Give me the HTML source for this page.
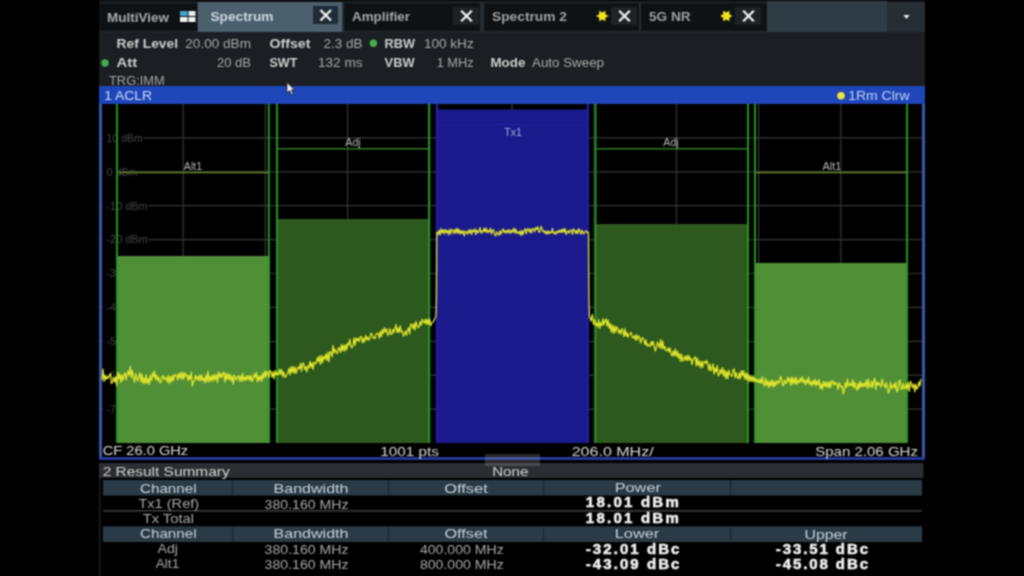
<!DOCTYPE html>
<html><head><meta charset="utf-8">
<style>
html,body{margin:0;padding:0;width:1024px;height:576px;background:#000;overflow:hidden}
svg{display:block}
text{font-family:"Liberation Sans",sans-serif}
</style></head><body>
<svg width="1024" height="576" viewBox="0 0 1024 576">
<defs><filter id="bl" x="0" y="0" width="1024" height="576" filterUnits="userSpaceOnUse" color-interpolation-filters="sRGB"><feConvolveMatrix order="3" kernelMatrix="1 2 1 2 4 2 1 2 1" divisor="16" edgeMode="duplicate"/></filter></defs>
<g filter="url(#bl)">
<rect x="0" y="0" width="1024" height="576" fill="#000"/>
<rect x="99" y="0" width="826" height="32" fill="#262d33" />
<rect x="99" y="0" width="826" height="2" fill="#0d1013" />
<rect x="99" y="3" width="98" height="28" fill="#0e1215" />
<text x="107" y="22" font-size="13" font-weight="bold" fill="#a9a9a9" text-anchor="start" textLength="62" lengthAdjust="spacingAndGlyphs">MultiView</text>
<g><rect x="180" y="11" width="7.5" height="5" fill="#3ea4d6"/><rect x="188.5" y="11" width="7" height="5" fill="#ececec"/><rect x="180" y="17" width="7.5" height="5" fill="#f2f2f2"/><rect x="188.5" y="17" width="7" height="5" fill="#f2f2f2"/></g>
<rect x="198" y="2" width="144" height="30" fill="#4b5f6d" />
<text x="210.5" y="21" font-size="13" font-weight="bold" fill="#cfd9e0" text-anchor="start" textLength="63" lengthAdjust="spacingAndGlyphs">Spectrum</text>
<rect x="313" y="6" width="25" height="18" fill="#1f2b36" />
<rect x="344" y="3" width="136" height="28" fill="#0e1215" />
<text x="352" y="21" font-size="13" font-weight="bold" fill="#a8a8a8" text-anchor="start" textLength="58" lengthAdjust="spacingAndGlyphs">Amplifier</text>
<rect x="453" y="7" width="26" height="18" fill="#1d2226" />
<rect x="484" y="3" width="155" height="28" fill="#0e1215" />
<text x="492" y="21" font-size="13" font-weight="bold" fill="#a0a0a0" text-anchor="start" textLength="75" lengthAdjust="spacingAndGlyphs">Spectrum 2</text>
<rect x="611" y="7" width="26" height="18" fill="#1d2226" />
<rect x="641" y="3" width="126" height="28" fill="#0e1215" />
<text x="649" y="21" font-size="13" font-weight="bold" fill="#a0a0a0" text-anchor="start" textLength="41.5" lengthAdjust="spacingAndGlyphs">5G NR</text>
<rect x="735" y="7" width="26" height="18" fill="#1d2226" />
<rect x="767" y="1" width="120" height="31" fill="#2f3c46" />
<g stroke="#f0f0f0" stroke-width="2.3"><path d="M320.5,10 L331,20.5 M331,10 L320.5,20.5"/><path d="M461.2,10.8 L471.8,21.2 M471.8,10.8 L461.2,21.2"/><path d="M619.2,10.8 L629.8,21.2 M629.8,10.8 L619.2,21.2"/><path d="M743.2,10.8 L753.8,21.2 M753.8,10.8 L743.2,21.2"/></g>
<polygon points="608.50,16.00 605.42,17.80 605.40,21.37 602.30,19.60 599.20,21.37 599.18,17.80 596.10,16.00 599.18,14.20 599.20,10.63 602.30,12.40 605.40,10.63 605.42,14.20" fill="#f5e21a"/>
<polygon points="732.50,16.00 729.42,17.80 729.40,21.37 726.30,19.60 723.20,21.37 723.18,17.80 720.10,16.00 723.18,14.20 723.20,10.63 726.30,12.40 729.40,10.63 729.42,14.20" fill="#f5e21a"/>
<polygon points="903.5,15 909.5,15 906.5,19" fill="#f0f0f0"/>
<rect x="99" y="32" width="826" height="54" fill="#1b1e23" />
<text x="116.6" y="48.4" font-size="12.5" font-weight="bold" fill="#cccccc" text-anchor="start" textLength="61.5" lengthAdjust="spacingAndGlyphs">Ref Level</text>
<text x="251" y="48.4" font-size="12.5" fill="#a8a8a8" text-anchor="end" textLength="65.7" lengthAdjust="spacingAndGlyphs">20.00 dBm</text>
<text x="269.5" y="48.4" font-size="12.5" font-weight="bold" fill="#cccccc" text-anchor="start" textLength="41" lengthAdjust="spacingAndGlyphs">Offset</text>
<text x="362.5" y="48.4" font-size="12.5" fill="#a8a8a8" text-anchor="end" textLength="39" lengthAdjust="spacingAndGlyphs">2.3 dB</text>
<text x="384.6" y="48.4" font-size="12.5" font-weight="bold" fill="#cccccc" text-anchor="start" textLength="30.4" lengthAdjust="spacingAndGlyphs">RBW</text>
<text x="473.7" y="48.4" font-size="12.5" fill="#a8a8a8" text-anchor="end" textLength="49.8" lengthAdjust="spacingAndGlyphs">100 kHz</text>
<text x="116.6" y="67.3" font-size="12.5" font-weight="bold" fill="#cccccc" text-anchor="start" textLength="20.7" lengthAdjust="spacingAndGlyphs">Att</text>
<text x="251" y="67.3" font-size="12.5" fill="#a8a8a8" text-anchor="end" textLength="34" lengthAdjust="spacingAndGlyphs">20 dB</text>
<text x="269.5" y="67.3" font-size="12.5" font-weight="bold" fill="#cccccc" text-anchor="start">SWT</text>
<text x="362.5" y="67.3" font-size="12.5" fill="#a8a8a8" text-anchor="end" textLength="44.5" lengthAdjust="spacingAndGlyphs">132 ms</text>
<text x="384.6" y="67.3" font-size="12.5" font-weight="bold" fill="#cccccc" text-anchor="start" textLength="30" lengthAdjust="spacingAndGlyphs">VBW</text>
<text x="473.7" y="67.3" font-size="12.5" fill="#a8a8a8" text-anchor="end" textLength="37" lengthAdjust="spacingAndGlyphs">1 MHz</text>
<text x="490.4" y="67.3" font-size="12.5" font-weight="bold" fill="#cccccc" text-anchor="start" textLength="35" lengthAdjust="spacingAndGlyphs">Mode</text>
<text x="532" y="67.3" font-size="12.5" fill="#a8a8a8" text-anchor="start" textLength="72" lengthAdjust="spacingAndGlyphs">Auto Sweep</text>
<text x="109" y="84.5" font-size="12.5" fill="#a4a4a4" text-anchor="start" textLength="55.8" lengthAdjust="spacingAndGlyphs">TRG:IMM</text>
<circle cx="105" cy="63" r="3.7" fill="#44b04c"/><circle cx="373.4" cy="43.3" r="3.7" fill="#44b04c"/>
<rect x="99" y="86" width="826" height="18" fill="#1e46b8" />
<text x="104.3" y="100" font-size="13" fill="#cfdcf6" text-anchor="start" textLength="47.7" lengthAdjust="spacingAndGlyphs">1 ACLR</text>
<circle cx="841" cy="95.8" r="3.8" fill="#f2e43a"/>
<text x="848.2" y="100" font-size="13" fill="#c0d0f0" text-anchor="start" textLength="61.4" lengthAdjust="spacingAndGlyphs">1Rm Clrw</text>
<polygon points="287,82.5 287,93 289.6,90.6 291.6,95 293.2,94.2 291.3,90 294.5,90" fill="#f4f4f4" stroke="#111" stroke-width="0.7"/>
<rect x="99" y="104" width="3" height="356" fill="#3a58a8" />
<rect x="922" y="104" width="3" height="356" fill="#3a58a8" />
<rect x="99" y="457" width="826" height="3" fill="#283898" />
<g stroke="#363636" stroke-width="1.2"><line x1="183.2" y1="104" x2="183.2" y2="443"/><line x1="265.4" y1="104" x2="265.4" y2="443"/><line x1="347.6" y1="104" x2="347.6" y2="443"/><line x1="429.8" y1="104" x2="429.8" y2="443"/><line x1="512.0" y1="104" x2="512.0" y2="443"/><line x1="594.2" y1="104" x2="594.2" y2="443"/><line x1="676.4" y1="104" x2="676.4" y2="443"/><line x1="758.6" y1="104" x2="758.6" y2="443"/><line x1="840.8" y1="104" x2="840.8" y2="443"/><line x1="102" y1="137.9" x2="922" y2="137.9"/><line x1="102" y1="171.8" x2="922" y2="171.8"/><line x1="102" y1="205.7" x2="922" y2="205.7"/><line x1="102" y1="239.6" x2="922" y2="239.6"/><line x1="102" y1="273.5" x2="922" y2="273.5"/><line x1="102" y1="307.4" x2="922" y2="307.4"/><line x1="102" y1="341.3" x2="922" y2="341.3"/><line x1="102" y1="375.2" x2="922" y2="375.2"/><line x1="102" y1="409.1" x2="922" y2="409.1"/></g>
<rect x="103" y="131.9" width="40.4" height="12" fill="#000" />
<text x="106.5" y="141.7" font-size="10.5" fill="#464646" text-anchor="start" textLength="36.4" lengthAdjust="spacingAndGlyphs">10 dBm</text>
<rect x="103" y="165.8" width="35" height="12" fill="#000" />
<text x="106.5" y="175.6" font-size="10.5" fill="#464646" text-anchor="start" textLength="31" lengthAdjust="spacingAndGlyphs">0 dBm</text>
<rect x="103" y="199.7" width="45" height="12" fill="#000" />
<text x="106.5" y="209.5" font-size="10.5" fill="#464646" text-anchor="start" textLength="41" lengthAdjust="spacingAndGlyphs">-10 dBm</text>
<rect x="103" y="233.6" width="45" height="12" fill="#000" />
<text x="106.5" y="243.4" font-size="10.5" fill="#464646" text-anchor="start" textLength="41" lengthAdjust="spacingAndGlyphs">-20 dBm</text>
<rect x="103" y="267.5" width="45" height="12" fill="#000" />
<text x="106.5" y="277.3" font-size="10.5" fill="#464646" text-anchor="start" textLength="41" lengthAdjust="spacingAndGlyphs">-30 dBm</text>
<rect x="103" y="301.4" width="45" height="12" fill="#000" />
<text x="106.5" y="311.2" font-size="10.5" fill="#464646" text-anchor="start" textLength="41" lengthAdjust="spacingAndGlyphs">-40 dBm</text>
<rect x="103" y="335.3" width="45" height="12" fill="#000" />
<text x="106.5" y="345.1" font-size="10.5" fill="#464646" text-anchor="start" textLength="41" lengthAdjust="spacingAndGlyphs">-50 dBm</text>
<rect x="103" y="369.2" width="45" height="12" fill="#000" />
<text x="106.5" y="379.0" font-size="10.5" fill="#464646" text-anchor="start" textLength="41" lengthAdjust="spacingAndGlyphs">-60 dBm</text>
<rect x="103" y="403.1" width="45" height="12" fill="#000" />
<text x="106.5" y="412.9" font-size="10.5" fill="#464646" text-anchor="start" textLength="41" lengthAdjust="spacingAndGlyphs">-70 dBm</text>
<rect x="117" y="256" width="153" height="187" fill="#518f37" />
<rect x="277" y="219" width="151" height="224" fill="#2d581e" />
<rect x="436" y="109.5" width="153" height="333.5" fill="#1a1a8c" />
<rect x="595" y="224" width="153" height="219" fill="#2d581e" />
<rect x="755" y="263" width="152" height="180" fill="#518f37" />
<g stroke="#239a25" stroke-width="1.9"><line x1="117" y1="104" x2="117" y2="443"/><line x1="268.8" y1="104" x2="268.8" y2="443"/><line x1="277" y1="104" x2="277" y2="443"/><line x1="429" y1="104" x2="429" y2="443"/><line x1="595.5" y1="104" x2="595.5" y2="443"/><line x1="748" y1="104" x2="748" y2="443"/><line x1="755" y1="104" x2="755" y2="443"/><line x1="907" y1="104" x2="907" y2="443"/></g>
<g stroke="#1e1ea6" stroke-width="2.4"><line x1="437" y1="104" x2="437" y2="443"/><line x1="587.8" y1="104" x2="587.8" y2="443"/></g>
<g stroke-width="1.6"><line x1="118" y1="172.5" x2="268" y2="172.5" stroke="#6a862c" stroke-width="1.3"/><line x1="756" y1="172.5" x2="906" y2="172.5" stroke="#6a862c" stroke-width="1.3"/><line x1="278" y1="148.8" x2="428" y2="148.8" stroke="#347a26"/><line x1="596" y1="148.8" x2="747" y2="148.8" stroke="#347a26"/><line x1="438" y1="124.5" x2="587" y2="124.5" stroke="#20209e" stroke-width="1.2"/></g>
<text x="193" y="170.3" font-size="10.5" fill="#b4b4b4" text-anchor="middle" textLength="18.3" lengthAdjust="spacingAndGlyphs">Alt1</text>
<text x="353" y="146" font-size="10.5" fill="#b4b4b4" text-anchor="middle" textLength="15.5" lengthAdjust="spacingAndGlyphs">Adj</text>
<text x="513" y="135.5" font-size="10.5" fill="#aab0dc" text-anchor="middle" textLength="17.6" lengthAdjust="spacingAndGlyphs">Tx1</text>
<text x="671" y="146" font-size="10.5" fill="#b4b4b4" text-anchor="middle" textLength="15.5" lengthAdjust="spacingAndGlyphs">Adj</text>
<text x="832" y="170.3" font-size="10.5" fill="#b4b4b4" text-anchor="middle" textLength="19" lengthAdjust="spacingAndGlyphs">Alt1</text>
<path d="M102.0,380.3 L103.0,369.0 L104.1,381.5 L105.1,375.0 L106.2,379.7 L107.2,376.2 L108.3,378.3 L109.3,375.2 L110.4,373.6 L111.4,383.6 L112.5,381.8 L113.5,377.4 L114.6,382.2 L115.6,376.8 L116.7,385.8 L117.7,372.3 L118.8,378.9 L119.8,374.0 L120.9,382.6 L121.9,375.0 L123.0,380.3 L124.0,374.7 L125.1,372.9 L126.1,379.8 L127.2,374.4 L128.2,370.9 L129.3,375.6 L130.3,366.4 L131.4,377.7 L132.4,370.5 L133.5,378.2 L134.6,382.1 L135.6,373.6 L136.7,378.2 L137.7,381.0 L138.8,375.8 L139.8,372.8 L140.9,381.9 L141.9,374.0 L143.0,383.3 L144.0,378.0 L145.1,383.5 L146.1,374.7 L147.2,383.4 L148.2,378.6 L149.3,384.3 L150.3,375.6 L151.4,380.5 L152.4,372.9 L153.5,376.8 L154.5,371.1 L155.6,379.7 L156.6,375.0 L157.7,380.5 L158.7,377.2 L159.8,382.7 L160.8,382.7 L161.9,377.1 L162.9,375.5 L164.0,379.6 L165.0,377.3 L166.1,378.2 L167.1,381.8 L168.2,375.4 L169.2,383.3 L170.3,376.5 L171.3,382.1 L172.4,375.3 L173.4,380.9 L174.5,374.6 L175.5,375.7 L176.6,374.9 L177.6,379.9 L178.7,373.3 L179.7,378.2 L180.8,372.4 L181.8,379.3 L182.9,372.4 L183.9,378.8 L185.0,372.6 L186.0,376.2 L187.1,374.8 L188.1,380.6 L189.2,375.3 L190.2,379.5 L191.3,372.2 L192.3,386.2 L193.4,381.6 L194.4,381.3 L195.5,375.2 L196.5,379.4 L197.6,376.5 L198.6,380.6 L199.7,374.8 L200.7,380.6 L201.8,375.0 L202.8,380.7 L203.9,378.3 L204.9,382.8 L206.0,374.8 L207.0,381.6 L208.1,371.2 L209.1,382.0 L210.2,376.3 L211.2,381.1 L212.3,375.0 L213.3,380.8 L214.4,374.7 L215.4,379.8 L216.5,374.5 L217.5,382.4 L218.6,371.9 L219.6,377.4 L220.7,373.7 L221.7,377.9 L222.8,373.1 L223.8,372.1 L224.9,381.9 L225.9,373.4 L227.0,379.5 L228.0,373.6 L229.1,379.7 L230.1,374.4 L231.2,380.8 L232.2,375.8 L233.3,384.2 L234.3,375.1 L235.4,377.8 L236.4,380.1 L237.5,376.3 L238.5,375.8 L239.6,381.1 L240.6,375.6 L241.7,381.3 L242.7,373.4 L243.8,380.5 L244.8,376.9 L245.9,380.5 L246.9,375.4 L248.0,379.3 L249.0,375.6 L250.1,380.5 L251.1,375.4 L252.2,381.6 L253.2,379.1 L254.3,373.9 L255.3,377.4 L256.4,372.5 L257.4,381.6 L258.5,376.0 L259.5,380.5 L260.6,375.9 L261.6,381.1 L262.7,373.3 L263.7,378.3 L264.8,370.8 L265.8,377.0 L266.9,371.7 L267.9,372.5 L269.0,377.4 L270.0,370.3 L271.1,372.4 L272.1,377.3 L273.2,371.5 L274.2,378.9 L275.3,370.7 L276.3,375.1 L277.4,372.7 L278.4,375.0 L279.5,369.1 L280.5,374.4 L281.6,369.4 L282.6,376.6 L283.7,371.8 L284.7,377.2 L285.8,377.1 L286.8,374.3 L287.9,372.7 L288.9,368.4 L290.0,375.0 L291.0,366.7 L292.1,372.7 L293.1,366.5 L294.2,373.5 L295.2,367.0 L296.3,373.3 L297.3,368.8 L298.4,367.0 L299.4,369.2 L300.5,363.4 L301.5,371.5 L302.6,363.3 L303.6,363.0 L304.7,369.6 L305.7,366.5 L306.8,371.9 L307.8,365.9 L308.9,368.0 L309.9,361.4 L311.0,367.4 L312.0,362.7 L313.1,369.5 L314.1,362.0 L315.2,363.9 L316.2,363.2 L317.3,357.6 L318.3,362.0 L319.4,355.8 L320.4,364.3 L321.5,355.4 L322.5,362.9 L323.6,356.4 L324.6,359.1 L325.7,354.0 L326.7,360.4 L327.8,352.5 L328.8,361.8 L329.9,351.3 L330.9,353.1 L332.0,356.9 L333.0,345.3 L334.1,353.2 L335.1,349.1 L336.2,352.3 L337.2,353.7 L338.3,348.1 L339.3,347.8 L340.4,352.6 L341.4,344.6 L342.5,350.9 L343.5,344.8 L344.6,351.2 L345.6,344.7 L346.7,349.9 L347.7,343.1 L348.8,345.2 L349.8,339.1 L350.9,346.3 L351.9,347.9 L353.0,345.2 L354.0,337.9 L355.1,345.5 L356.1,338.0 L357.2,340.9 L358.2,338.2 L359.3,341.7 L360.3,336.6 L361.4,336.7 L362.4,342.9 L363.5,338.1 L364.5,342.2 L365.6,335.3 L366.6,339.9 L367.7,336.8 L368.7,340.2 L369.8,338.8 L370.8,333.3 L371.9,334.1 L372.9,338.0 L374.0,337.1 L375.0,338.8 L376.1,333.6 L377.1,333.4 L378.2,333.3 L379.2,338.2 L380.3,331.4 L381.3,337.0 L382.4,329.3 L383.4,333.6 L384.5,327.9 L385.5,331.9 L386.6,328.8 L387.6,335.4 L388.7,334.4 L389.7,328.4 L390.8,334.2 L391.8,334.4 L392.9,329.3 L393.9,332.6 L395.0,328.2 L396.0,324.4 L397.1,332.6 L398.1,328.0 L399.2,332.5 L400.2,325.7 L401.3,332.0 L402.3,331.0 L403.4,336.2 L404.4,334.5 L405.5,331.0 L406.5,335.4 L407.6,330.3 L408.6,327.4 L409.7,333.8 L410.7,323.9 L411.8,325.1 L412.8,328.6 L413.9,323.3 L414.9,330.2 L416.0,321.4 L417.0,325.4 L418.1,327.8 L419.1,326.5 L420.2,321.5 L421.2,325.3 L422.3,319.3 L423.3,321.7 L424.4,323.0 L425.4,319.2 L426.5,324.4 L427.5,319.2 L428.6,324.5 L429.6,318.8 L430.7,325.7 L431.7,322.9 L433.5,321.5 L436.0,316.0 L436.4,300.0 L436.8,232.0 L438.0,234.4 L439.1,230.1 L440.1,235.0 L441.2,228.7 L442.2,233.0 L443.3,229.6 L444.3,233.8 L445.4,229.5 L446.4,232.6 L447.5,230.4 L448.5,234.9 L449.6,229.1 L450.6,234.0 L451.7,229.4 L452.7,230.3 L453.8,233.6 L454.8,229.3 L455.9,233.1 L456.9,228.1 L458.0,233.4 L459.0,229.1 L460.1,234.0 L461.1,230.6 L462.2,233.6 L463.2,230.6 L464.3,235.8 L465.3,231.1 L466.4,231.9 L467.4,234.2 L468.5,230.0 L469.5,233.4 L470.6,229.3 L471.6,234.5 L472.7,230.1 L473.7,231.9 L474.8,228.8 L475.8,234.5 L476.9,230.0 L477.9,232.8 L479.0,231.4 L480.0,227.7 L481.1,233.3 L482.1,230.8 L483.2,232.0 L484.2,228.0 L485.3,232.2 L486.3,228.2 L487.4,232.8 L488.4,230.5 L489.5,232.2 L490.5,228.1 L491.6,234.0 L492.6,230.1 L493.7,229.8 L494.7,234.8 L495.8,235.8 L496.8,231.9 L497.9,233.5 L498.9,235.4 L500.0,230.6 L501.0,234.0 L502.1,231.1 L503.1,228.8 L504.2,232.8 L505.2,230.6 L506.3,233.1 L507.3,230.0 L508.4,232.8 L509.4,229.7 L510.5,233.3 L511.5,230.4 L512.6,232.1 L513.6,228.1 L514.7,233.0 L515.7,228.9 L516.8,233.3 L517.8,231.9 L518.9,233.7 L519.9,231.0 L521.0,235.6 L522.0,230.4 L523.1,234.7 L524.1,230.7 L525.2,228.7 L526.2,233.7 L527.3,229.0 L528.3,228.7 L529.4,232.4 L530.4,228.8 L531.5,233.1 L532.5,228.6 L533.6,228.9 L534.6,231.8 L535.7,227.4 L536.7,229.4 L537.8,226.7 L538.8,232.2 L539.9,232.0 L540.9,226.4 L542.0,228.4 L543.0,231.8 L544.1,230.6 L545.1,233.6 L546.2,231.1 L547.2,234.2 L548.3,230.8 L549.3,233.7 L550.4,231.8 L551.4,232.8 L552.5,228.5 L553.5,233.5 L554.6,232.1 L555.6,234.4 L556.7,231.1 L557.7,233.0 L558.8,230.3 L559.8,232.5 L560.9,229.6 L561.9,232.5 L563.0,228.7 L564.0,232.3 L565.1,228.7 L566.1,234.3 L567.2,232.0 L568.2,230.7 L569.3,233.2 L570.3,230.0 L571.4,229.8 L572.4,234.3 L573.5,229.0 L574.5,230.1 L575.6,233.5 L576.6,230.4 L577.7,233.7 L578.7,228.7 L579.8,230.9 L580.8,234.2 L581.9,230.2 L582.9,233.0 L584.0,233.9 L585.0,231.3 L586.1,230.9 L587.1,232.6 L588.5,232.0 L589.0,300.0 L589.4,316.0 L591.0,321.0 L592.4,314.5 L593.4,324.3 L594.5,319.5 L595.5,325.6 L596.6,322.9 L597.6,327.2 L598.7,319.6 L599.7,328.3 L600.8,322.6 L601.8,325.7 L602.9,318.8 L603.9,325.0 L605.0,320.6 L606.0,318.8 L607.0,326.0 L608.1,319.9 L609.1,328.3 L610.2,323.3 L611.2,332.2 L612.3,324.9 L613.3,333.3 L614.4,325.9 L615.4,332.6 L616.5,326.7 L617.5,328.0 L618.6,333.1 L619.6,330.0 L620.7,334.1 L621.7,328.6 L622.8,331.1 L623.8,336.3 L624.9,328.6 L625.9,336.1 L627.0,332.5 L628.0,337.3 L629.1,334.3 L630.1,334.0 L631.2,332.3 L632.2,337.7 L633.3,337.9 L634.3,335.6 L635.4,340.0 L636.4,334.6 L637.5,340.2 L638.5,335.9 L639.6,337.1 L640.6,343.2 L641.7,338.9 L642.7,337.5 L643.8,339.7 L644.8,344.5 L645.9,339.9 L646.9,346.1 L648.0,343.8 L649.0,346.1 L650.1,346.5 L651.1,341.5 L652.2,345.3 L653.2,341.3 L654.3,346.4 L655.3,351.1 L656.4,347.5 L657.4,342.1 L658.5,344.9 L659.5,347.9 L660.6,339.7 L661.6,348.8 L662.7,340.9 L663.7,348.7 L664.8,346.5 L665.8,350.9 L666.9,350.6 L667.9,347.9 L669.0,352.0 L670.0,347.9 L671.1,354.5 L672.1,355.9 L673.2,350.8 L674.2,356.1 L675.3,348.9 L676.3,356.5 L677.4,351.1 L678.4,358.1 L679.5,353.5 L680.5,361.3 L681.6,354.1 L682.6,360.9 L683.7,360.2 L684.7,356.2 L685.8,360.4 L686.8,355.4 L687.9,360.7 L688.9,355.3 L690.0,360.1 L691.0,358.2 L692.1,364.6 L693.1,359.3 L694.2,358.4 L695.2,356.7 L696.3,365.9 L697.3,357.8 L698.4,365.6 L699.4,361.0 L700.5,367.7 L701.5,361.0 L702.6,367.5 L703.6,361.8 L704.7,361.3 L705.7,363.8 L706.8,360.5 L707.8,363.9 L708.9,370.4 L709.9,364.0 L711.0,370.9 L712.0,368.5 L713.1,363.8 L714.1,374.1 L715.2,368.0 L716.2,372.1 L717.3,365.4 L718.3,375.9 L719.4,374.3 L720.4,369.3 L721.5,373.8 L722.5,367.5 L723.6,376.2 L724.6,369.8 L725.7,378.6 L726.7,371.3 L727.8,378.6 L728.8,370.1 L729.9,374.6 L730.9,375.3 L732.0,376.3 L733.0,370.2 L734.1,368.9 L735.1,377.8 L736.2,372.5 L737.2,377.4 L738.3,378.6 L739.3,372.6 L740.4,378.9 L741.4,370.6 L742.5,375.7 L743.5,370.7 L744.6,379.1 L745.6,373.0 L746.7,379.9 L747.7,373.4 L748.8,381.7 L749.8,375.3 L750.9,381.6 L751.9,375.9 L753.0,382.0 L754.0,376.5 L755.1,381.6 L756.1,378.9 L757.2,382.2 L758.2,379.5 L759.3,382.7 L760.3,379.1 L761.4,383.7 L762.4,376.8 L763.5,383.3 L764.5,386.1 L765.6,378.5 L766.6,385.3 L767.7,380.6 L768.7,387.6 L769.8,381.7 L770.8,385.9 L771.9,379.8 L772.9,386.8 L774.0,381.3 L775.0,386.3 L776.1,381.2 L777.1,384.0 L778.2,380.8 L779.2,383.1 L780.3,376.8 L781.3,377.1 L782.4,384.8 L783.4,385.8 L784.5,380.0 L785.5,383.3 L786.6,383.1 L787.6,377.2 L788.7,381.6 L789.7,378.1 L790.8,385.5 L791.8,376.9 L792.9,384.0 L793.9,378.1 L795.0,383.9 L796.0,377.0 L797.1,384.4 L798.1,380.1 L799.2,382.6 L800.2,378.2 L801.3,381.9 L802.3,376.6 L803.4,382.5 L804.4,379.7 L805.5,384.9 L806.5,379.6 L807.6,383.1 L808.6,376.9 L809.7,384.6 L810.7,381.6 L811.8,385.8 L812.8,380.7 L813.9,384.7 L814.9,379.4 L816.0,385.9 L817.0,380.8 L818.1,384.8 L819.1,379.4 L820.2,388.7 L821.2,384.1 L822.3,389.6 L823.3,381.5 L824.4,386.6 L825.4,381.8 L826.5,387.1 L827.5,382.1 L828.6,387.8 L829.6,381.7 L830.7,387.4 L831.7,380.9 L832.8,381.1 L833.8,385.2 L834.9,381.9 L835.9,384.3 L837.0,383.6 L838.0,389.7 L839.1,382.9 L840.1,384.8 L841.2,387.7 L842.2,386.0 L843.3,393.8 L844.3,389.8 L845.4,382.6 L846.4,387.7 L847.5,379.0 L848.5,385.9 L849.6,385.1 L850.6,383.1 L851.7,386.2 L852.7,379.6 L853.8,387.8 L854.8,382.4 L855.9,387.5 L856.9,390.4 L858.0,383.4 L859.0,388.9 L860.1,381.3 L861.1,387.2 L862.2,382.8 L863.2,386.7 L864.3,383.3 L865.3,386.4 L866.4,380.0 L867.4,388.3 L868.5,379.3 L869.5,386.9 L870.6,387.1 L871.6,381.2 L872.7,387.7 L873.7,381.2 L874.8,378.2 L875.8,389.4 L876.9,381.8 L877.9,385.2 L879.0,382.4 L880.0,385.1 L881.1,387.0 L882.1,379.1 L883.2,384.9 L884.2,384.6 L885.3,387.8 L886.3,382.5 L887.4,387.8 L888.4,393.2 L889.5,390.0 L890.5,382.2 L891.6,388.7 L892.6,386.6 L893.7,384.2 L894.7,388.5 L895.8,382.1 L896.8,391.7 L897.9,390.6 L898.9,381.4 L900.0,380.1 L901.0,389.0 L902.1,389.2 L903.1,383.5 L904.2,388.6 L905.2,388.1 L906.3,383.8 L907.3,389.5 L908.4,382.5 L909.4,391.4 L910.5,381.2 L911.5,384.5 L912.6,387.6 L913.6,383.8 L914.7,391.8 L915.7,384.2 L916.8,389.2 L917.8,387.7 L918.9,381.9 L919.9,386.0 L921.0,378.9" fill="none" stroke="#e2e62c" stroke-width="1.25" stroke-linejoin="round"/>
<text x="102.7" y="455.4" font-size="13" fill="#d6d6d6" text-anchor="start" textLength="85.5" lengthAdjust="spacingAndGlyphs">CF 26.0 GHz</text>
<text x="380.3" y="455.5" font-size="13" fill="#d6d6d6" text-anchor="start" textLength="58.5" lengthAdjust="spacingAndGlyphs">1001 pts</text>
<text x="571.7" y="455.5" font-size="13" fill="#d6d6d6" text-anchor="start" textLength="82" lengthAdjust="spacingAndGlyphs">206.0 MHz/</text>
<text x="918" y="455.5" font-size="13" fill="#d6d6d6" text-anchor="end" textLength="102.8" lengthAdjust="spacingAndGlyphs">Span 2.06 GHz</text>
<rect x="99" y="463" width="824.5" height="15" fill="#2a2d31" />
<text x="102.7" y="475.8" font-size="13" fill="#d2d2d2" text-anchor="start" textLength="127" lengthAdjust="spacingAndGlyphs">2 Result Summary</text>
<text x="492.2" y="475.6" font-size="13" fill="#d2d2d2" text-anchor="start" textLength="36.2" lengthAdjust="spacingAndGlyphs">None</text>
<rect x="485" y="454" width="55" height="12" fill="#c8c8c8" opacity="0.2"/>
<rect x="103" y="480" width="819" height="15.5" fill="#2a3a46" />
<rect x="103" y="526.3" width="819" height="15.7" fill="#2a3a46" />
<rect x="103" y="510" width="819" height="1.6" fill="#3c3c3c" />
<rect x="99" y="478" width="1.5" height="98" fill="#1c1f23" />
<rect x="232" y="480" width="1.2" height="15.5" fill="#1a2630" />
<rect x="232" y="526.3" width="1.2" height="15.7" fill="#1a2630" />
<rect x="388" y="480" width="1.2" height="15.5" fill="#1a2630" />
<rect x="388" y="526.3" width="1.2" height="15.7" fill="#1a2630" />
<rect x="543" y="480" width="1.2" height="15.5" fill="#1a2630" />
<rect x="543" y="526.3" width="1.2" height="15.7" fill="#1a2630" />
<rect x="730" y="480" width="1.2" height="15.5" fill="#1a2630" />
<rect x="730" y="526.3" width="1.2" height="15.7" fill="#1a2630" />
<text x="168.3" y="492.5" font-size="13" fill="#c6d2da" text-anchor="middle" textLength="56.5" lengthAdjust="spacingAndGlyphs">Channel</text>
<text x="311" y="492.5" font-size="13" fill="#c6d2da" text-anchor="middle" textLength="75" lengthAdjust="spacingAndGlyphs">Bandwidth</text>
<text x="466" y="492.5" font-size="13" fill="#c6d2da" text-anchor="middle" textLength="43.6" lengthAdjust="spacingAndGlyphs">Offset</text>
<text x="637.8" y="491.8" font-size="13" fill="#c6d2da" text-anchor="middle" textLength="46.3" lengthAdjust="spacingAndGlyphs">Power</text>
<text x="168.8" y="507.8" font-size="13" fill="#a6a6a6" text-anchor="middle" textLength="60.8" lengthAdjust="spacingAndGlyphs">Tx1 (Ref)</text>
<text x="306.6" y="508.5" font-size="13" fill="#a6a6a6" text-anchor="middle" textLength="84" lengthAdjust="spacingAndGlyphs">380.160 MHz</text>
<text x="632.3" y="507.2" font-size="15" font-weight="bold" stroke="#f2f2f2" stroke-width="0.55" fill="#f2f2f2" text-anchor="middle" textLength="93" lengthAdjust="spacing">18.01 dBm</text>
<text x="168.3" y="522.5" font-size="13" fill="#a6a6a6" text-anchor="middle" textLength="51.3" lengthAdjust="spacingAndGlyphs">Tx Total</text>
<text x="632.3" y="522.8" font-size="15" font-weight="bold" stroke="#f2f2f2" stroke-width="0.55" fill="#f2f2f2" text-anchor="middle" textLength="93" lengthAdjust="spacing">18.01 dBm</text>
<text x="168.3" y="537.8" font-size="13" fill="#c6d2da" text-anchor="middle" textLength="56.5" lengthAdjust="spacingAndGlyphs">Channel</text>
<text x="311" y="537.8" font-size="13" fill="#c6d2da" text-anchor="middle" textLength="75" lengthAdjust="spacingAndGlyphs">Bandwidth</text>
<text x="466" y="538.2" font-size="13" fill="#c6d2da" text-anchor="middle" textLength="43" lengthAdjust="spacingAndGlyphs">Offset</text>
<text x="637" y="538.4" font-size="13" fill="#c6d2da" text-anchor="middle" textLength="44.5" lengthAdjust="spacingAndGlyphs">Lower</text>
<text x="826" y="538.5" font-size="13" fill="#c6d2da" text-anchor="middle" textLength="43" lengthAdjust="spacingAndGlyphs">Upper</text>
<text x="167.7" y="553.3" font-size="13" fill="#a6a6a6" text-anchor="middle" textLength="20.5" lengthAdjust="spacingAndGlyphs">Adj</text>
<text x="306.6" y="553.5" font-size="13" fill="#a6a6a6" text-anchor="middle" textLength="84" lengthAdjust="spacingAndGlyphs">380.160 MHz</text>
<text x="461.9" y="553.5" font-size="13" fill="#a6a6a6" text-anchor="middle" textLength="84" lengthAdjust="spacingAndGlyphs">400.000 MHz</text>
<text x="632.6" y="554" font-size="15" font-weight="bold" stroke="#f2f2f2" stroke-width="0.55" fill="#f2f2f2" text-anchor="middle" textLength="93.7" lengthAdjust="spacing">-32.01 dBc</text>
<text x="821.9" y="553.5" font-size="15" font-weight="bold" stroke="#f2f2f2" stroke-width="0.55" fill="#f2f2f2" text-anchor="middle" textLength="92.3" lengthAdjust="spacing">-33.51 dBc</text>
<text x="167.5" y="568" font-size="13" fill="#a6a6a6" text-anchor="middle" textLength="23.4" lengthAdjust="spacingAndGlyphs">Alt1</text>
<text x="306.6" y="568.5" font-size="13" fill="#a6a6a6" text-anchor="middle" textLength="84" lengthAdjust="spacingAndGlyphs">380.160 MHz</text>
<text x="461.9" y="568.5" font-size="13" fill="#a6a6a6" text-anchor="middle" textLength="84" lengthAdjust="spacingAndGlyphs">800.000 MHz</text>
<text x="632.6" y="568.9" font-size="15" font-weight="bold" stroke="#f2f2f2" stroke-width="0.55" fill="#f2f2f2" text-anchor="middle" textLength="93.7" lengthAdjust="spacing">-43.09 dBc</text>
<text x="821.9" y="568.5" font-size="15" font-weight="bold" stroke="#f2f2f2" stroke-width="0.55" fill="#f2f2f2" text-anchor="middle" textLength="92.3" lengthAdjust="spacing">-45.08 dBc</text>
</g>
</svg>
</body></html>
